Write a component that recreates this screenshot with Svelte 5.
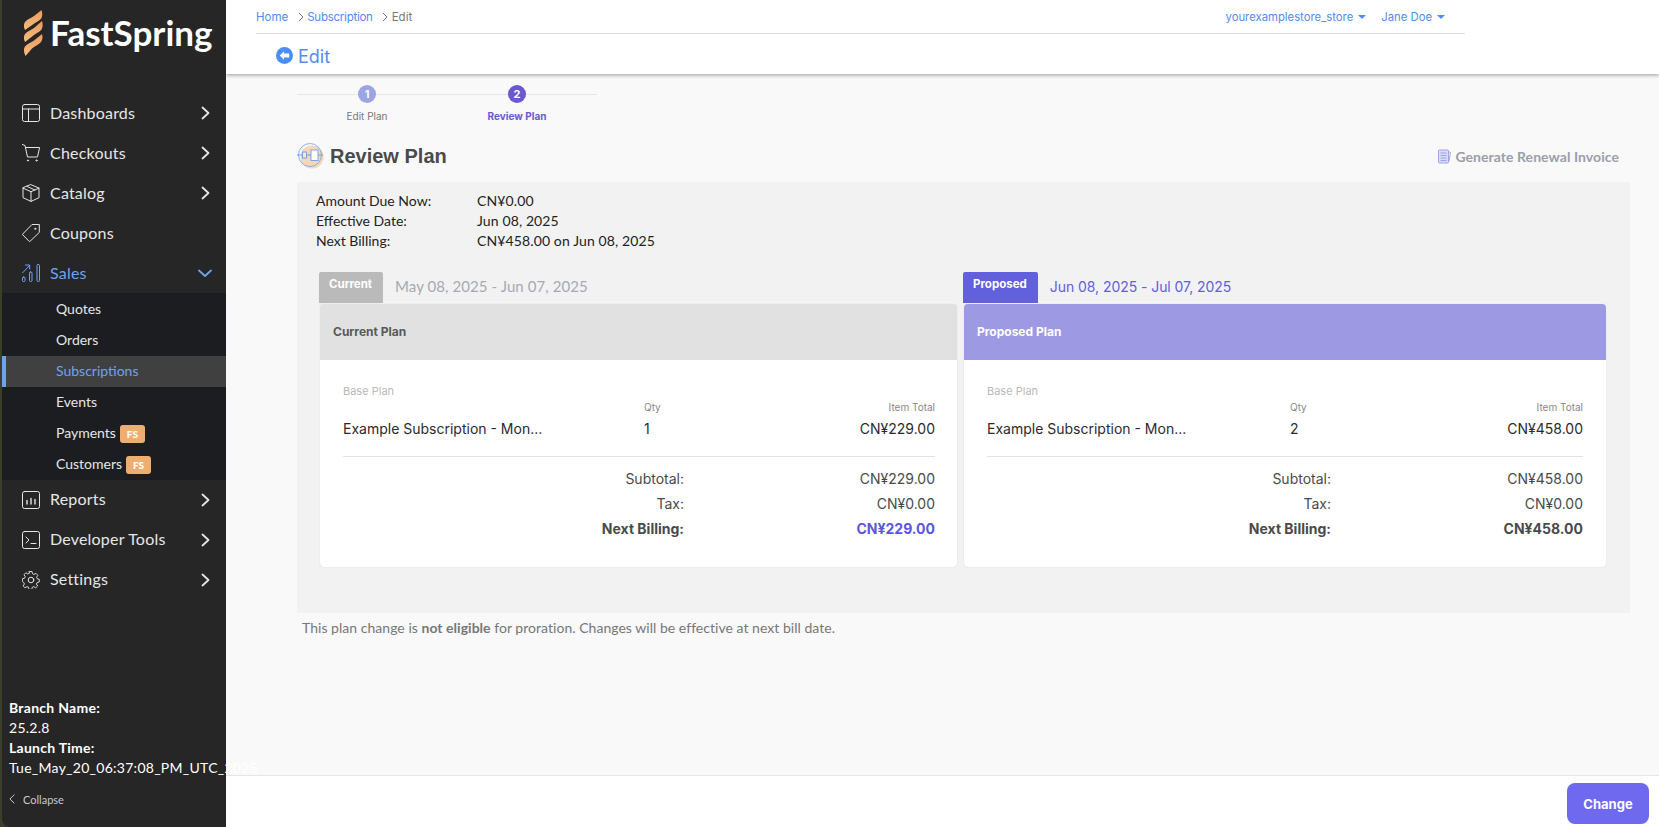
<script>
	const navTop = [
		{ label: 'Dashboards', icon: 'dash' },
		{ label: 'Checkouts', icon: 'cart' },
		{ label: 'Catalog', icon: 'box' },
		{ label: 'Coupons', icon: 'tag', noArrow: true }
	];
	const subNav = [
		{ label: 'Quotes' },
		{ label: 'Orders' },
		{ label: 'Subscriptions', active: true },
		{ label: 'Events' },
		{ label: 'Payments', fs: true },
		{ label: 'Customers', fs: true }
	];
	const navBottom = [
		{ label: 'Reports', icon: 'report' },
		{ label: 'Developer Tools', icon: 'term' },
		{ label: 'Settings', icon: 'gear' }
	];
	const summary = [
		['Amount Due Now:', 'CN¥0.00'],
		['Effective Date:', 'Jun 08, 2025'],
		['Next Billing:', 'CN¥458.00 on Jun 08, 2025']
	];
	const plans = [
		{ key: 'current', tab: 'Current', dates: 'May 08, 2025 - Jun 07, 2025', title: 'Current Plan', qty: 1, item: 'CN¥229.00' },
		{ key: 'proposed', tab: 'Proposed', dates: 'Jun 08, 2025 - Jul 07, 2025', title: 'Proposed Plan', qty: 2, item: 'CN¥458.00' }
	];
</script>

{#snippet navIcon(name)}
	<svg class="nav-icon" viewBox="0 0 18 18" fill="none" stroke="currentColor" stroke-width="1" stroke-linecap="round" stroke-linejoin="round">
		{#if name === 'dash'}
			<rect x="0.5" y="0.5" width="17" height="17" rx="2" />
			<path d="M0.5 5h17M6.5 5v12.5" />
		{:else if name === 'cart'}
			<path d="M0.5 0.5l2.5 1 2.5 11.5h9.5M3.6 3.5h14l-2 9" />
			<circle cx="6" cy="16.5" r="0.6" />
			<circle cx="14.5" cy="16.5" r="0.6" />
		{:else if name === 'box'}
			<path d="M9 0.7l8 3.4v9.6l-8 3.7-8-3.7V4.1zM1 4.1l8 3.6 8-3.6M9 7.7v10M5 2.4l8 3.6" />
		{:else if name === 'tag'}
			<path d="M17.3 0.8v7.6L8.2 17.2q-.6.5-1.2 0L0.9 11q-.5-.6 0-1.2L9.7 0.8z" />
			<circle cx="13.2" cy="4.8" r="0.6" />
		{:else if name === 'report'}
			<rect x="0.5" y="0.5" width="17" height="17" rx="2" />
			<path d="M5 9.5v3.5M9 7.5v5.5M13 8.5v4.5" stroke-width="1.4" />
		{:else if name === 'term'}
			<rect x="0.5" y="0.5" width="17" height="17" rx="2" />
			<path d="M4 6l3 3-3 3M9 12.5h5" />
		{:else if name === 'gear'}
			<path d="M7.5 0.8h3l.5 2.4 1.7.8 2.1-1.3 2 2.2-1.3 2 .7 1.8 2.2.5-.1 3-2.3.5-.7 1.7 1.3 2.1-2.1 2-2.1-1.3-1.6.7-.6 2.3h-3l-.5-2.3-1.7-.7-2.1 1.3-2-2.1 1.3-2.1-.8-1.7L0 11.600v-3l2.300-.5.8-1.800-1.300-2 2-2.200 2.100 1.300 1.700-.8z" transform="scale(.92) translate(.4 -.2)" />
			<circle cx="9" cy="9" r="2.800" />
		{/if}
	</svg>
{/snippet}

{#snippet chevron(open)}
	<svg class="chevron" viewBox="0 0 10 14" fill="none" stroke="currentColor" stroke-width="1.800" stroke-linecap="round" stroke-linejoin="round">
		{#if open}
			<path d="M-2 4.500l6 5.500 6-5.500" />
		{:else}
			<path d="M1.500 1.500l6 5.500-6 5.500" />
		{/if}
	</svg>
{/snippet}

<div class="app">
	<aside class="sidebar">
		<div class="logo">
			<svg class="logo-mark" viewBox="0 0 20 46" aria-hidden="true">
				<defs>
					<linearGradient id="mark" x1="0" y1="0" x2="0" y2="1">
						<stop offset="0" stop-color="#ec9a5f" />
						<stop offset="1" stop-color="#f6bd80" />
					</linearGradient>
				</defs>
				<g fill="url(#mark)">
					<path d="M18.500 0C19.500 3 19.500 6 18.500 8C17.500 10 15 11 12 13L2 20C.5 17 .5 14 2 12C4 9.500 8 8 11 6Z" />
					<path d="M19 11C20 14 20 17 18.500 19.500C17 21.500 14 23 11 25L2 32C.5 29 .5 26 2 24C4 21.500 8 20 11 18Z" />
					<path d="M19 24C20 27 19.500 30 18 32C16 34.500 12 36 9 38.500L2.500 46C.5 42 .5 38.500 2 36.500C4 34 8 32.500 11 30.500Z" />
				</g>
			</svg>
			<span class="logo-text">FastSpring</span>
		</div>

		<nav class="nav">
			{#each navTop as item}
				<div class="nav-item">
					{@render navIcon(item.icon)}
					<span class="nav-label">{item.label}</span>
					{#if !item.noArrow}{@render chevron(false)}{/if}
				</div>
			{/each}
			<div class="nav-item open">
				<svg class="nav-icon" viewBox="0 0 18 18" fill="none" stroke="currentColor" stroke-width="1" stroke-linecap="round" stroke-linejoin="round">
					<rect x="0.500" y="13" width="2.500" height="4.500" rx="1" />
					<rect x="7.500" y="8" width="2.500" height="9.500" rx="1" />
					<rect x="15" y="0.500" width="2.500" height="17" rx="1" />
					<path d="M0.500 9l7-7.500M3.500 1h4.200v4" />
				</svg>
				<span class="nav-label">Sales</span>
				{@render chevron(true)}
			</div>
			<div class="subnav">
				{#each subNav as sub}
					<div class="sub-item" class:active={sub.active}>
						<span class="sub-label">{sub.label}</span>
						{#if sub.fs}<span class="fs">FS</span>{/if}
					</div>
				{/each}
			</div>
			{#each navBottom as item}
				<div class="nav-item lower">
					{@render navIcon(item.icon)}
					<span class="nav-label">{item.label}</span>
					{@render chevron(false)}
				</div>
			{/each}
		</nav>

		<div class="build">
			<div><b>Branch Name:</b></div>
			<div>25.2.8</div>
			<div><b>Launch Time:</b></div>
			<div>Tue_May_20_06:37:08_PM_UTC_2025</div>
		</div>
		<div class="collapse">
			<svg viewBox="0 0 7 12" fill="none" stroke="currentColor" stroke-width="1.200" stroke-linecap="round" stroke-linejoin="round"><path d="M6 1L1 6l5 5" /></svg>
			<span>Collapse</span>
		</div>
	</aside>

	<div class="main">
		<header class="header">
			<div class="topbar">
				<div class="crumbs">
					<span class="link">Home</span>
					<svg viewBox="0 0 6 10" fill="none" stroke="#777" stroke-width="1"><path d="M1 1l4 4-4 4" /></svg>
					<span class="link narrow">Subscription</span>
					<svg viewBox="0 0 6 10" fill="none" stroke="#777" stroke-width="1"><path d="M1 1l4 4-4 4" /></svg>
					<span class="here">Edit</span>
				</div>
				<div class="account">
					<span class="link">yourexamplestore_store<i class="caret"></i></span>
					<span class="link">Jane Doe<i class="caret"></i></span>
				</div>
			</div>
			<div class="page-title">
				<svg viewBox="0 0 18 18"><circle cx="9" cy="9" r="9" fill="#4a8df5" /><path d="M8.500 4.500L4 9l4.500 4.500V11H14V7H8.500z" fill="#fff" /></svg>
				<span>Edit</span>
			</div>
		</header>

		<main class="content">
			<div class="steps">
				<div class="step">
					<span class="dot">1</span>
					<span class="step-label">Edit Plan</span>
				</div>
				<div class="step on">
					<span class="dot">2</span>
					<span class="step-label">Review Plan</span>
				</div>
			</div>

			<div class="title-row">
				<div class="title">
					<svg viewBox="0 0 28 26" fill="none">
						<circle cx="15" cy="14" r="11.500" fill="#f6d6b8" />
						<circle cx="13" cy="12" r="11.500" stroke="#6fa0ee" stroke-width=".8" />
						<path d="M0 12h26" stroke="#5e93ea" stroke-width=".8" />
						<rect x="5.500" y="9" width="4" height="6" fill="#f9e8d8" stroke="#5e93ea" stroke-width=".8" />
						<rect x="14" y="7" width="7" height="10.500" fill="#fff" stroke="#5e93ea" stroke-width=".8" />
					</svg>
					<h1>Review Plan</h1>
				</div>
				<div class="generate">
					<svg viewBox="0 0 14 15" fill="none" stroke="#8f93e6" stroke-width=".8"><rect x="1.500" y="1" width="10" height="13" rx="1" fill="#d9dbf7" /><path d="M3.500 4h6M3.500 6.500h6M3.500 9h6M3.500 11.500h6M11.500 3l2 .3-1.500 9" /></svg>
					<span>Generate Renewal Invoice</span>
				</div>
			</div>

			<section class="panel">
				<div class="summary">
					{#each summary as row}
						<span>{row[0]}</span>
						<span class="val">{row[1]}</span>
					{/each}
				</div>

				<div class="plans">
					{#each plans as plan}
						<div class="plan {plan.key}">
							<div class="tab-row">
								<span class="tab">{plan.tab}</span>
								<span class="dates">{plan.dates}</span>
							</div>
							<div class="card">
								<div class="card-head">{plan.title}</div>
								<div class="card-body">
									<div class="base">Base Plan</div>
									<div class="line-head">
										<span></span>
										<span>Qty</span>
										<span>Item Total</span>
									</div>
									<div class="line-item">
										<span>Example Subscription - Mon...</span>
										<span>{plan.qty}</span>
										<span>{plan.item}</span>
									</div>
									<div class="totals">
										<span>Subtotal:</span><span>{plan.item}</span>
										<span>Tax:</span><span>CN¥0.00</span>
										<b>Next Billing:</b><b class="due">{plan.item}</b>
									</div>
								</div>
							</div>
						</div>
					{/each}
				</div>
			</section>

			<p class="note">This plan change is <b>not eligible</b> for proration. Changes will be effective at next bill date.</p>
		</main>

		<footer class="footer">
			<button class="change" type="button">Change</button>
		</footer>
	</div>
</div>

<style>
	:global(body) {
		margin: 0;
		background: #fff;
	}

	.app {
		display: flex;
		width: 1659px;
		height: 827px;
		overflow: hidden;
		font-family: Inter, "Noto Sans", sans-serif;
		background: #3a3f2c;
	}

	/* sidebar */
	.sidebar {
		position: relative;
		z-index: 2;
		flex: none;
		display: flex;
		flex-direction: column;
		width: 224px;
		margin-left: 2px;
		background: #262626;
		border-bottom-left-radius: 8px;
		color: #e6e6e6;
		font-family: Lato, sans-serif;
	}

	.logo {
		display: flex;
		align-items: center;
		gap: 7px;
		height: 57px;
		padding: 8px 0 0 21px;
		box-sizing: border-box;
	}

	.logo-mark {
		width: 20px;
		height: 46px;
	}

	.logo-text {
		font-family: Lato, sans-serif;
		font-size: 35px;
		font-weight: 700;
		color: #fff;
		line-height: 1;
	}

	.nav {
		margin-top: 36px;
	}

	.nav-item {
		display: flex;
		align-items: center;
		height: 40px;
		padding: 0 15px 0 20px;
		font-size: 16px;
		letter-spacing: 0.2px;
	}

	.nav-item.open {
		color: #6ea3f0;
	}

	.nav-icon {
		flex: none;
		width: 18px;
		height: 18px;
		margin-right: 10px;
	}

	.nav-label {
		flex: 1;
		padding-bottom: 2px;
	}

	.lower .nav-label {
		padding-bottom: 4px;
	}

	.chevron {
		flex: none;
		width: 10px;
		height: 14px;
		overflow: visible;
	}

	.subnav {
		background: #1c1d21;
		padding-top: 1px;
	}

	.sub-item {
		display: flex;
		align-items: center;
		gap: 4px;
		height: 31px;
		padding-left: 54px;
		font-size: 14px;
	}

	.sub-label {
		padding-bottom: 2px;
	}

	.sub-item.active {
		background: #404040;
		color: #6ea3f0;
		box-shadow: inset 4px 0 0 #6ea3f0;
	}

	.fs {
		width: 25px;
		height: 18px;
		border-radius: 3px;
		background: #eeae72;
		color: #fff;
		font-size: 10px;
		font-weight: 900;
		line-height: 18px;
		text-align: center;
	}

	.build {
		margin-top: auto;
		padding-left: 7px;
		font-size: 14px;
		line-height: 20px;
		letter-spacing: 0.27px;
		color: #fff;
		white-space: nowrap;
	}

	.collapse {
		display: flex;
		align-items: center;
		gap: 8px;
		height: 48px;
		padding: 0 0 8px 7px;
		box-sizing: border-box;
		font-size: 11px;
		color: #c9c9c9;
		margin-top: 1px;
	}

	.collapse svg {
		width: 6px;
		height: 10px;
	}

	/* main column */
	.main {
		flex: 1;
		display: flex;
		flex-direction: column;
		min-width: 0;
		background: #f9f9f9;
	}

	.header {
		flex: none;
		height: 74px;
		background: #fff;
		box-shadow: 0 1px 4px rgba(0, 0, 0, 0.4);
		position: relative;
		z-index: 1;
	}

	.topbar {
		display: flex;
		justify-content: space-between;
		align-items: center;
		height: 33px;
		margin: 0 194px 0 30px;
		border-bottom: 1px solid #e0e0e0;
		font-size: 11.5px;
	}

	.link {
		color: #4f8cf6;
	}

	.narrow {
		letter-spacing: -0.25px;
	}

	.here {
		color: #777;
	}

	.crumbs {
		display: flex;
		align-items: center;
	}

	.crumbs svg {
		width: 6px;
		height: 10px;
		margin: 0 3.5px 0 9.5px;
	}

	.account {
		display: flex;
		gap: 15px;
		margin-right: 20px;
		font-size: 11.3px;
	}

	.caret {
		display: inline-block;
		margin-left: 5px;
		vertical-align: 2px;
		border: 4px solid transparent;
		border-top: 4px solid #4f8cf6;
		border-bottom: 0;
	}

	.page-title {
		display: flex;
		align-items: center;
		gap: 5px;
		padding: 12px 0 0 50px;
		color: #4f8cf6;
		font-size: 18px;
		line-height: 22px;
	}

	.page-title svg {
		width: 17px;
		height: 17px;
		margin-top: -4px;
	}

	.content {
		flex: 1;
		padding: 0 29px 0 71px;
		min-height: 0;
	}

	.steps {
		display: grid;
		grid-template-columns: 140px 160px;
		width: 300px;
		height: 58px;
		padding-top: 11px;
		box-sizing: border-box;
		background: linear-gradient(#e6e6e6, #e6e6e6) 0 20px / 100% 1px no-repeat;
	}

	.step {
		display: flex;
		flex-direction: column;
		align-items: center;
		gap: 7px;
		font-size: 10px;
		color: #777;
	}

	.dot {
		width: 18px;
		height: 18px;
		border-radius: 50%;
		background: #9aa5e2;
		color: #fff;
		font-size: 11px;
		font-weight: 700;
		line-height: 18px;
		text-align: center;
	}

	.step.on {
		color: #6a58cf;
		font-weight: 700;
	}

	.step.on .dot {
		background: #6a58cf;
	}

	.title-row {
		display: flex;
		justify-content: space-between;
		align-items: center;
		height: 50px;
		padding: 0 11px 2px 0;
		box-sizing: border-box;
	}

	.title {
		display: flex;
		align-items: center;
		gap: 5px;
	}

	.title svg {
		width: 28px;
		height: 26px;
	}

	h1 {
		margin: 0;
		font-family: "Liberation Sans", sans-serif;
		font-size: 20px;
		font-weight: 700;
		color: #4a4a4a;
	}

	.generate {
		display: flex;
		align-items: center;
		gap: 4px;
		font-family: Lato, sans-serif;
		font-size: 14px;
		font-weight: 700;
		letter-spacing: 0.06px;
		color: #9b9eab;
	}

	.generate svg {
		width: 14px;
		height: 15px;
	}

	.panel {
		height: 431px;
		padding: 9px 24px 0 19px;
		box-sizing: border-box;
		background: #f2f2f2;
	}

	.summary {
		display: grid;
		grid-template-columns: 161px 1fr;
		font-family: Lato, sans-serif;
		font-size: 14px;
		line-height: 20px;
		color: #222;
	}

	.val {
		letter-spacing: 0.12px;
	}

	.plans {
		display: grid;
		grid-template-columns: 637px 642px;
		gap: 7px;
		margin: 21px 0 0 4px;
	}

	.tab-row {
		display: flex;
		align-items: flex-start;
		gap: 12px;
		height: 32px;
	}

	.tab {
		height: 31px;
		margin-left: -1px;
		padding: 0 11px 0 10px;
		border-radius: 2px 2px 0 0;
		font-size: 11.5px;
		font-weight: 700;
		line-height: 25px;
		color: #fff;
	}

	.dates {
		font-family: Lato, sans-serif;
		font-size: 15px;
		line-height: 28px;
		letter-spacing: 0.08px;
	}

	.current .tab {
		background: #bababa;
	}

	.current .dates {
		color: #a6a9b5;
	}

	.proposed .tab {
		background: #6260dc;
	}

	.proposed .dates {
		color: #6260dc;
		font-family: Inter, sans-serif;
		font-size: 14px;
		line-height: 29px;
		letter-spacing: -0.06px;
	}

	.card {
		height: 263px;
		background: #fff;
		border-radius: 4px;
		overflow: hidden;
		box-shadow: 0 0 1px rgba(0, 0, 0, 0.2);
	}

	.card-head {
		height: 56px;
		padding-left: 13px;
		font-size: 12px;
		font-weight: 700;
		line-height: 56px;
	}

	.current .card-head {
		background: #e1e1e1;
		color: #595959;
	}

	.proposed .card-head {
		background: #9d99e3;
		color: #fff;
	}

	.card-body {
		padding: 24px 22px 0 23px;
	}

	.proposed .card-body {
		padding-right: 23px;
	}

	.base {
		font-size: 11px;
		line-height: 14px;
		color: #b9b9b9;
	}

	.line-head,
	.line-item {
		display: grid;
		grid-template-columns: 301px 1fr auto;
	}

	.proposed .line-head,
	.proposed .line-item {
		grid-template-columns: 303px 1fr auto;
	}

	.line-head {
		height: 16px;
		margin-top: 1px;
		font-size: 10px;
		line-height: 16px;
		color: #888;
	}

	.line-item {
		height: 42px;
		padding-top: 4px;
		box-sizing: border-box;
		border-bottom: 1px solid #e3e3e3;
		font-size: 14px;
		line-height: 20px;
		color: #2a2a2e;
	}

	.totals {
		display: grid;
		grid-template-columns: 341px 1fr;
		grid-auto-rows: 25px;
		padding-top: 9px;
		font-size: 14px;
		line-height: 25px;
		color: #4a4a4a;
		text-align: right;
	}

	.proposed .totals {
		grid-template-columns: 344px 1fr;
	}

	.current .due {
		color: #5b55e0;
	}

	.note {
		margin: 6px 0 0 5px;
		font-family: Lato, sans-serif;
		font-size: 14px;
		letter-spacing: 0.03px;
		color: #777;
	}

	.footer {
		flex: none;
		display: flex;
		justify-content: flex-end;
		align-items: flex-start;
		height: 52px;
		padding: 7px 10px 0 0;
		box-sizing: border-box;
		background: #fff;
		border-top: 1px solid #e6e6e6;
	}

	.change {
		width: 82px;
		height: 41px;
		border: 0;
		border-radius: 8px;
		background: #6e69ee;
		color: #fff;
		font-family: Inter, sans-serif;
		font-size: 13px;
		font-weight: 700;
	}
</style>
